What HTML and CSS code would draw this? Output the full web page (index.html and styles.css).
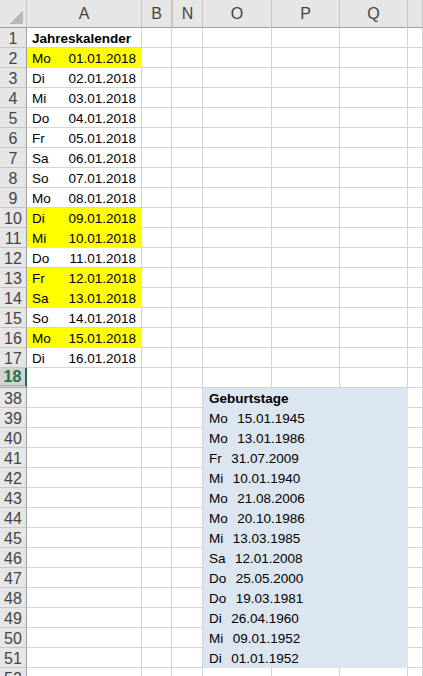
FILE: index.html
```html
<!DOCTYPE html>
<html lang="de">
<head>
    <meta charset="UTF-8">
    <meta name="viewport" content="width=device-width, initial-scale=1.0">
    <title>Jahreskalender</title>
    <link rel="stylesheet" href="styles.css">
</head>
<body>
    <table class="sheet">
        <colgroup>
            <col class="col-head">
            <col class="col-a">
            <col class="col-b">
            <col class="col-n">
            <col class="col-o">
            <col class="col-p">
            <col class="col-q">
            <col class="col-r">
        </colgroup>
        <thead>
            <tr class="col-labels">
                <th class="corner"></th>
                <th>A</th>
                <th>B</th>
                <th class="after-hidden">N</th>
                <th>O</th>
                <th>P</th>
                <th>Q</th>
                <th></th>
            </tr>
        </thead>
        <tbody>
            <tr><th>1</th><td class="bold">Jahreskalender</td><td></td><td></td><td></td><td></td><td></td><td></td></tr>
            <tr><th>2</th><td class="hl"><div class="day"><span>Mo</span><span>01.01.2018</span></div></td><td></td><td></td><td></td><td></td><td></td><td></td></tr>
            <tr><th>3</th><td><div class="day"><span>Di</span><span>02.01.2018</span></div></td><td></td><td></td><td></td><td></td><td></td><td></td></tr>
            <tr><th>4</th><td><div class="day"><span>Mi</span><span>03.01.2018</span></div></td><td></td><td></td><td></td><td></td><td></td><td></td></tr>
            <tr><th>5</th><td><div class="day"><span>Do</span><span>04.01.2018</span></div></td><td></td><td></td><td></td><td></td><td></td><td></td></tr>
            <tr><th>6</th><td><div class="day"><span>Fr</span><span>05.01.2018</span></div></td><td></td><td></td><td></td><td></td><td></td><td></td></tr>
            <tr><th>7</th><td><div class="day"><span>Sa</span><span>06.01.2018</span></div></td><td></td><td></td><td></td><td></td><td></td><td></td></tr>
            <tr><th>8</th><td><div class="day"><span>So</span><span>07.01.2018</span></div></td><td></td><td></td><td></td><td></td><td></td><td></td></tr>
            <tr><th>9</th><td><div class="day"><span>Mo</span><span>08.01.2018</span></div></td><td></td><td></td><td></td><td></td><td></td><td></td></tr>
            <tr><th>10</th><td class="hl"><div class="day"><span>Di</span><span>09.01.2018</span></div></td><td></td><td></td><td></td><td></td><td></td><td></td></tr>
            <tr><th>11</th><td class="hl"><div class="day"><span>Mi</span><span>10.01.2018</span></div></td><td></td><td></td><td></td><td></td><td></td><td></td></tr>
            <tr><th>12</th><td><div class="day"><span>Do</span><span>11.01.2018</span></div></td><td></td><td></td><td></td><td></td><td></td><td></td></tr>
            <tr><th>13</th><td class="hl"><div class="day"><span>Fr</span><span>12.01.2018</span></div></td><td></td><td></td><td></td><td></td><td></td><td></td></tr>
            <tr><th>14</th><td class="hl"><div class="day"><span>Sa</span><span>13.01.2018</span></div></td><td></td><td></td><td></td><td></td><td></td><td></td></tr>
            <tr><th>15</th><td><div class="day"><span>So</span><span>14.01.2018</span></div></td><td></td><td></td><td></td><td></td><td></td><td></td></tr>
            <tr><th>16</th><td class="hl"><div class="day"><span>Mo</span><span>15.01.2018</span></div></td><td></td><td></td><td></td><td></td><td></td><td></td></tr>
            <tr><th>17</th><td><div class="day"><span>Di</span><span>16.01.2018</span></div></td><td></td><td></td><td></td><td></td><td></td><td></td></tr>
            <tr class="selected"><th class="before-hidden">18</th><td></td><td></td><td></td><td></td><td></td><td></td><td></td></tr>
            <tr><th>38</th><td></td><td></td><td></td><td colspan="3" class="fill bold">Geburtstage</td><td></td></tr>
            <tr><th>39</th><td></td><td></td><td></td><td colspan="3" class="fill">Mo  15.01.1945</td><td></td></tr>
            <tr><th>40</th><td></td><td></td><td></td><td colspan="3" class="fill">Mo  13.01.1986</td><td></td></tr>
            <tr><th>41</th><td></td><td></td><td></td><td colspan="3" class="fill">Fr  31.07.2009</td><td></td></tr>
            <tr><th>42</th><td></td><td></td><td></td><td colspan="3" class="fill">Mi  10.01.1940</td><td></td></tr>
            <tr><th>43</th><td></td><td></td><td></td><td colspan="3" class="fill">Mo  21.08.2006</td><td></td></tr>
            <tr><th>44</th><td></td><td></td><td></td><td colspan="3" class="fill">Mo  20.10.1986</td><td></td></tr>
            <tr><th>45</th><td></td><td></td><td></td><td colspan="3" class="fill">Mi  13.03.1985</td><td></td></tr>
            <tr><th>46</th><td></td><td></td><td></td><td colspan="3" class="fill">Sa  12.01.2008</td><td></td></tr>
            <tr><th>47</th><td></td><td></td><td></td><td colspan="3" class="fill">Do  25.05.2000</td><td></td></tr>
            <tr><th>48</th><td></td><td></td><td></td><td colspan="3" class="fill">Do  19.03.1981</td><td></td></tr>
            <tr><th>49</th><td></td><td></td><td></td><td colspan="3" class="fill">Di  26.04.1960</td><td></td></tr>
            <tr><th>50</th><td></td><td></td><td></td><td colspan="3" class="fill">Mi  09.01.1952</td><td></td></tr>
            <tr><th>51</th><td></td><td></td><td></td><td colspan="3" class="fill">Di  01.01.1952</td><td></td></tr>
            <tr class="last-row"><th>52</th><td></td><td></td><td></td><td></td><td></td><td></td><td></td></tr>
        </tbody>
    </table>
</body>
</html>
```

FILE: styles.css
```css
body {
    margin: 0;
    padding: 0;
    background-color: white;
    font-family: "Liberation Sans", Arial, sans-serif;
    color: #000;
    overflow: hidden;
}

.sheet {
    border-collapse: separate;
    border-spacing: 0;
    table-layout: fixed;
    width: 423px;
    font-size: 13.5px;
}

.col-head { width: 27px; }
.col-a { width: 115px; }
.col-b { width: 30px; }
.col-n { width: 31px; }
.col-o { width: 69px; }
.col-p { width: 68px; }
.col-q { width: 68px; }
.col-r { width: 15px; }

.sheet tr {
    height: 20px;
}

.sheet td,
.sheet th {
    box-sizing: border-box;
    height: 20px;
    padding: 2px 5px 0;
    line-height: 17px;
    border-right: 1px solid #d4d4d4;
    border-bottom: 1px solid #d4d4d4;
    white-space: pre;
    overflow: hidden;
    vertical-align: middle;
}

/* column letters */
.sheet .col-labels th {
    height: 28px;
    background-color: #e6e6e6;
    color: #444;
    font-weight: normal;
    font-size: 16px;
    text-align: center;
    border-right: 1px solid #c6c6c6;
    border-bottom: 1px solid #9f9f9f;
    padding: 0;
}

.sheet .col-labels th.after-hidden {
    border-left: 1px solid #c6c6c6;
}

.corner {
    position: relative;
}

.corner::after {
    content: "";
    position: absolute;
    right: 3px;
    bottom: 3px;
    width: 13px;
    height: 13px;
    background: linear-gradient(to top left, #b8b8b8 50%, transparent 50%);
}

/* row numbers */
.sheet tbody th {
    background-color: #e6e6e6;
    color: #444;
    font-weight: normal;
    font-size: 16px;
    text-align: center;
    padding: 2px 0 0;
    border-right: 1px solid #9f9f9f;
    border-bottom: 1px solid #c6c6c6;
}

/* rows 19-37 are hidden */
.sheet tbody th.before-hidden {
    padding-top: 0;
    border-bottom: 3px double #b0b0b0;
}

.sheet .selected th {
    background-color: #d2d2d2;
    color: #217346;
    font-weight: bold;
    border-right: 2px solid #217346;
}

/* only the top of row 52 is in view */
.sheet .last-row th {
    vertical-align: top;
    line-height: 18px;
}

.bold {
    font-weight: bold;
}

.sheet td.hl {
    background-color: #ffff00;
    border-right-color: #ffff00;
    border-bottom-color: #ffff00;
}

.day {
    display: flex;
    justify-content: space-between;
}

.sheet td.fill {
    background-color: #dce6f1;
    border-right-color: #dce6f1;
    border-bottom-color: #dce6f1;
    padding-left: 6px;
    word-spacing: 1px;
}
```
